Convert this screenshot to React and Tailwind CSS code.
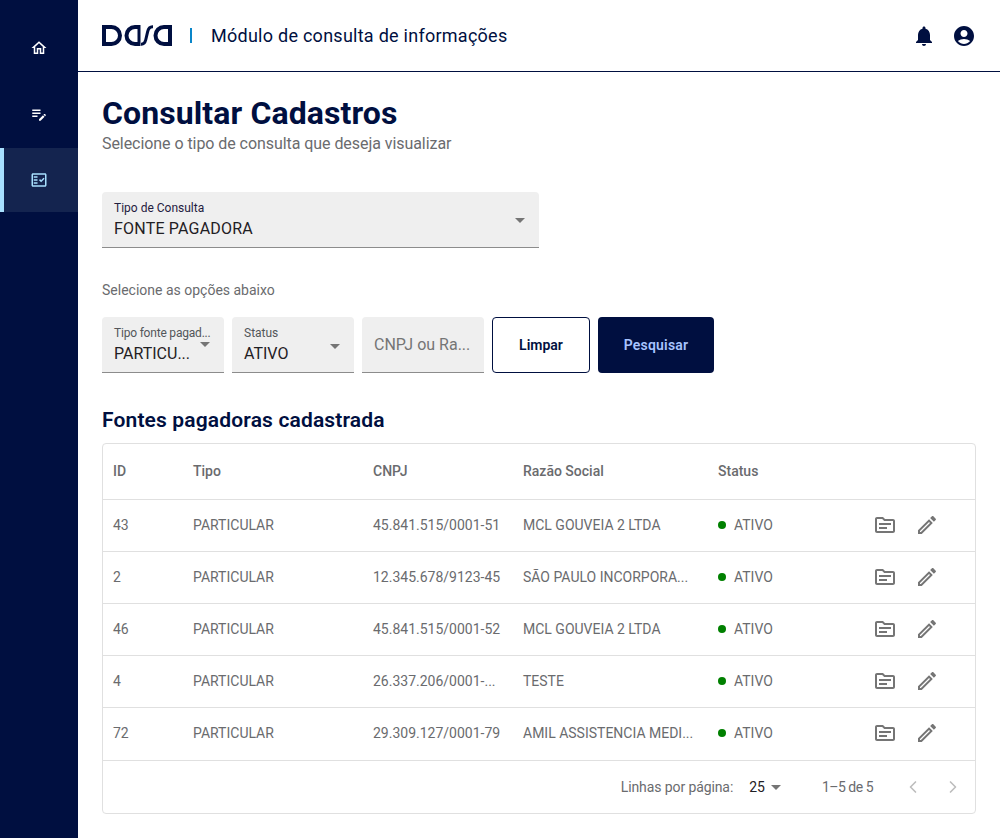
import { ChevronLeft, ChevronRight } from "lucide-react";

const Icon = ({ d, size = 24, className = "" }) => (
  <svg width={size} height={size} viewBox="0 0 24 24" fill="currentColor" className={className}>
    <path d={d} />
  </svg>
);

const ICONS = {
  home: "M12 5.69l5 4.5V18h-2v-6H9v6H7v-7.81l5-4.5M12 3L2 12h3v8h6v-6h2v6h6v-8h3L12 3z",
  note: "M3 10h11v2H3v-2zm0-2h11V6H3v2zm0 8h7v-2H3v2zm15.01-3.13.71-.71c.39-.39 1.02-.39 1.41 0l.71.71c.39.39.39 1.02 0 1.41l-.71.71-2.12-2.12zm-.71.71-5.3 5.3V21h2.12l5.3-5.3-2.12-2.12z",
  check:
    "M20 3H4c-1.1 0-2 .9-2 2v14c0 1.1.9 2 2 2h16c1.1 0 2-.9 2-2V5c0-1.1-.9-2-2-2zm0 16H4V5h16v14zM19.41 10.42l-1.42-1.42-3.17 3.17-1.41-1.42L12 12.17 14.82 15zM5 7h5v2H5zM5 11h5v2H5zM5 15h5v2H5z",
  bell: "M12 22c1.1 0 2-.9 2-2h-4c0 1.1.89 2 2 2zm6-6v-5c0-3.07-1.64-5.64-4.5-6.32V4c0-.83-.67-1.5-1.5-1.5s-1.5.67-1.5 1.5v.68C7.63 5.36 6 7.92 6 11v5l-2 2v1h16v-1l-2-2z",
  user: "M12 2C6.48 2 2 6.48 2 12s4.48 10 10 10 10-4.48 10-10S17.52 2 12 2zm0 4c1.93 0 3.5 1.57 3.5 3.5S13.93 13 12 13s-3.5-1.57-3.5-3.5S10.07 6 12 6zm0 14c-2.03 0-4.43-.82-6.14-2.88C7.55 15.8 9.68 15 12 15s4.45.8 6.14 2.12C16.43 19.18 14.03 20 12 20z",
  topic:
    "M20 6h-8l-2-2H4c-1.1 0-1.99.9-1.99 2L2 18c0 1.1.9 2 2 2h16c1.1 0 2-.9 2-2V8c0-1.1-.9-2-2-2zm0 12H4V6h5.17l2 2H20v10zm-6-2H6v-2h8v2zm4-4H6v-2h12v2z",
  edit: "M14.06 9.02l.92.92L5.92 19H5v-.92l9.06-9.06M17.66 3c-.25 0-.51.1-.7.29l-1.83 1.83 3.75 3.75 1.83-1.83c.39-.39.39-1.02 0-1.41l-2.34-2.34c-.2-.2-.45-.29-.71-.29zm-3.6 3.19L3 17.25V21h3.75L17.81 9.94l-3.75-3.75z",
};

const rows = [
  { id: "43", cnpj: "45.841.515/0001-51", razao: "MCL GOUVEIA 2 LTDA" },
  { id: "2", cnpj: "12.345.678/9123-45", razao: "SÃO PAULO INCORPORA..." },
  { id: "46", cnpj: "45.841.515/0001-52", razao: "MCL GOUVEIA 2 LTDA" },
  { id: "4", cnpj: "26.337.206/0001-...", razao: "TESTE" },
  { id: "72", cnpj: "29.309.127/0001-79", razao: "AMIL ASSISTENCIA MEDI...", last: true },
];

const Logo = () => (
  <svg width="70" height="21" viewBox="0 0 70 21" fill="none" stroke="#000f40" strokeWidth="4">
    <path d="M2 2h7.500a8.500 8.500 0 0 1 0 17H2z" />
    <path d="M37 2h-4a8.500 8.500 0 0 0 0 17h4" />
    <path d="M37 0v21" strokeWidth="3" />
    <path d="M39 19.200h.5c2.600 0 3.600-1.800 4.200-4.200l1.900-8.200C46.200 4 47.500 1.800 50.500 1.800h.5" strokeWidth="3" />
    <path d="M68 2h-6a8.500 8.500 0 0 0 0 17h6z" />
  </svg>
);

const Caret = ({ className = "" }) => (
  <span className={`w-0 h-0 border-x-[5px] border-x-transparent border-t-[5px] border-t-[#757575] ${className}`} />
);

const Field = ({ label, value, width, labelClass = "text-[#53565a]", valueClass = "", caretClass }) => (
  <div className={`relative ${width} h-14 bg-[#efefef] rounded-t border-b border-[#8c8c8c] px-3 pt-[8px]`}>
    <div className={`text-xs leading-4 whitespace-nowrap ${labelClass}`}>{label}</div>
    <div className={`text-base leading-[22px] text-[#1f2024] mt-[2px] ${valueClass}`}>{value}</div>
    <Caret className={`absolute ${caretClass}`} />
  </div>
);

const Row = ({ id, cnpj, razao, last }) => (
  <div className={`flex items-center border-t border-[#e0e0e0] text-sm text-[#6a6b6e] pb-[2px] ${last ? "h-[53px]" : "h-[52px]"}`}>
    <div className="w-[80px] pl-[10px]">{id}</div>
    <div className="w-[180px] pl-[10px]">PARTICULAR</div>
    <div className="w-[150px] pl-[10px]">{cnpj}</div>
    <div className="w-[195px] pl-[10px]">{razao}</div>
    <div className="flex items-center gap-2 w-[165px] pl-[10px]">
      <span className="w-2 h-2 rounded-full bg-[#008000]" />
      ATIVO
    </div>
    <div className="flex items-center gap-[18px] text-[#757575]">
      <Icon d={ICONS.topic} />
      <Icon d={ICONS.edit} />
    </div>
  </div>
);

export default function App() {
  return (
    <div
      className="flex min-h-[838px] bg-white text-[#000f40]"
      style={{ fontFamily: "Roboto, 'Liberation Sans', sans-serif" }}
    >
      <aside className="w-[78px] shrink-0 bg-[#000f40] text-white pt-4">
        <div className="flex items-center justify-center h-[64px]">
          <Icon d={ICONS.home} size={18} />
        </div>
        <div className="flex items-center justify-center h-[68px]">
          <Icon d={ICONS.note} size={18} />
        </div>
        <div className="flex items-center justify-center h-[64px] bg-[#14244f] border-l-4 border-[#a8e0ff] pr-1 text-[#a8e0ff]">
          <Icon d={ICONS.check} size={18} />
        </div>
      </aside>

      <div className="flex-1 min-w-0">
        <header className="flex items-center h-[72px] border-b border-[#000f40] pl-6 pr-[24px]">
          <Logo />
          <span className="w-[2px] h-[15px] bg-[#0a86c9] ml-[18px] mr-[19px]" />
          <span className="text-lg tracking-[0.26px]">Módulo de consulta de informações</span>
          <div className="ml-auto flex items-center gap-4">
            <Icon d={ICONS.bell} />
            <Icon d={ICONS.user} />
          </div>
        </header>

        <main className="px-6 pt-[25px]">
          <h1 className="text-[32px] leading-[36px] font-bold -mt-[2px] tracking-[0.1px]">Consultar Cadastros</h1>
          <p className="text-base leading-[18px] text-[#6a6b6e] mt-[4px] tracking-[-0.06px]">
            Selecione o tipo de consulta que deseja visualizar
          </p>

          <div className="mt-[39px]">
            <Field
              label="Tipo de Consulta"
              value="FONTE PAGADORA"
              width="w-[437px]"
              labelClass="text-[#1f2040]"
              valueClass="tracking-[0.2px]"
              caretClass="top-[26px] right-[14px]"
            />
          </div>

          <p className="text-sm leading-5 text-[#6a6b6e] mt-[32px]">Selecione as opções abaixo</p>

          <div className="flex gap-2 mt-[17px]">
            <Field
              label="Tipo fonte pagad..."
              value="PARTICU..."
              width="w-[122px]"
              labelClass="text-[#53565a] tracking-[-0.2px]"
              caretClass="top-[25px] right-[14px]"
            />
            <Field label="Status" value="ATIVO" width="w-[122px]" caretClass="top-[27px] right-[14px]" />
            <div className="w-[122px] h-14 bg-[#efefef] rounded-t border-b border-[#8c8c8c] px-3 flex items-center text-base text-[#757575]">
              CNPJ ou Ra...
            </div>
            <button className="w-[98px] h-14 rounded border border-[#000f40] bg-white text-sm font-semibold">
              Limpar
            </button>
            <button className="w-[116px] h-14 rounded bg-[#000f40] text-[#a8c4ff] text-sm font-semibold tracking-[0.2px]">
              Pesquisar
            </button>
          </div>

          <h2 className="text-[21px] leading-6 font-semibold mt-[35px] tracking-[0.15px]">Fontes pagadoras cadastrada</h2>

          <div className="mt-[11px] border border-[#e0e0e0] rounded">
            <div className="flex items-center h-[55px] text-sm font-medium text-[#6a6b6e] pb-[2px]">
              <div className="w-[80px] pl-[10px]">ID</div>
              <div className="w-[180px] pl-[10px]">Tipo</div>
              <div className="w-[150px] pl-[10px]">CNPJ</div>
              <div className="w-[195px] pl-[10px]">Razão Social</div>
              <div className="pl-[10px]">Status</div>
            </div>
            {rows.map((row) => (
              <Row key={row.id} {...row} />
            ))}
            <div className="flex items-center h-[53px] border-t border-[#e0e0e0] text-sm text-[#6a6b6e]">
              <span className="ml-auto tracking-[-0.1px]">Linhas por página:</span>
              <span className="ml-4 text-[#1f2024]">25</span>
              <Caret className="ml-[6px]" />
              <span className="ml-[41px] tracking-[-0.5px]">1–5 de 5</span>
              <ChevronLeft size={20} className="ml-[30px] text-[#bdbdbd]" />
              <ChevronRight size={20} className="ml-[20px] mr-3 text-[#bdbdbd]" />
            </div>
          </div>
        </main>
      </div>
    </div>
  );
}
